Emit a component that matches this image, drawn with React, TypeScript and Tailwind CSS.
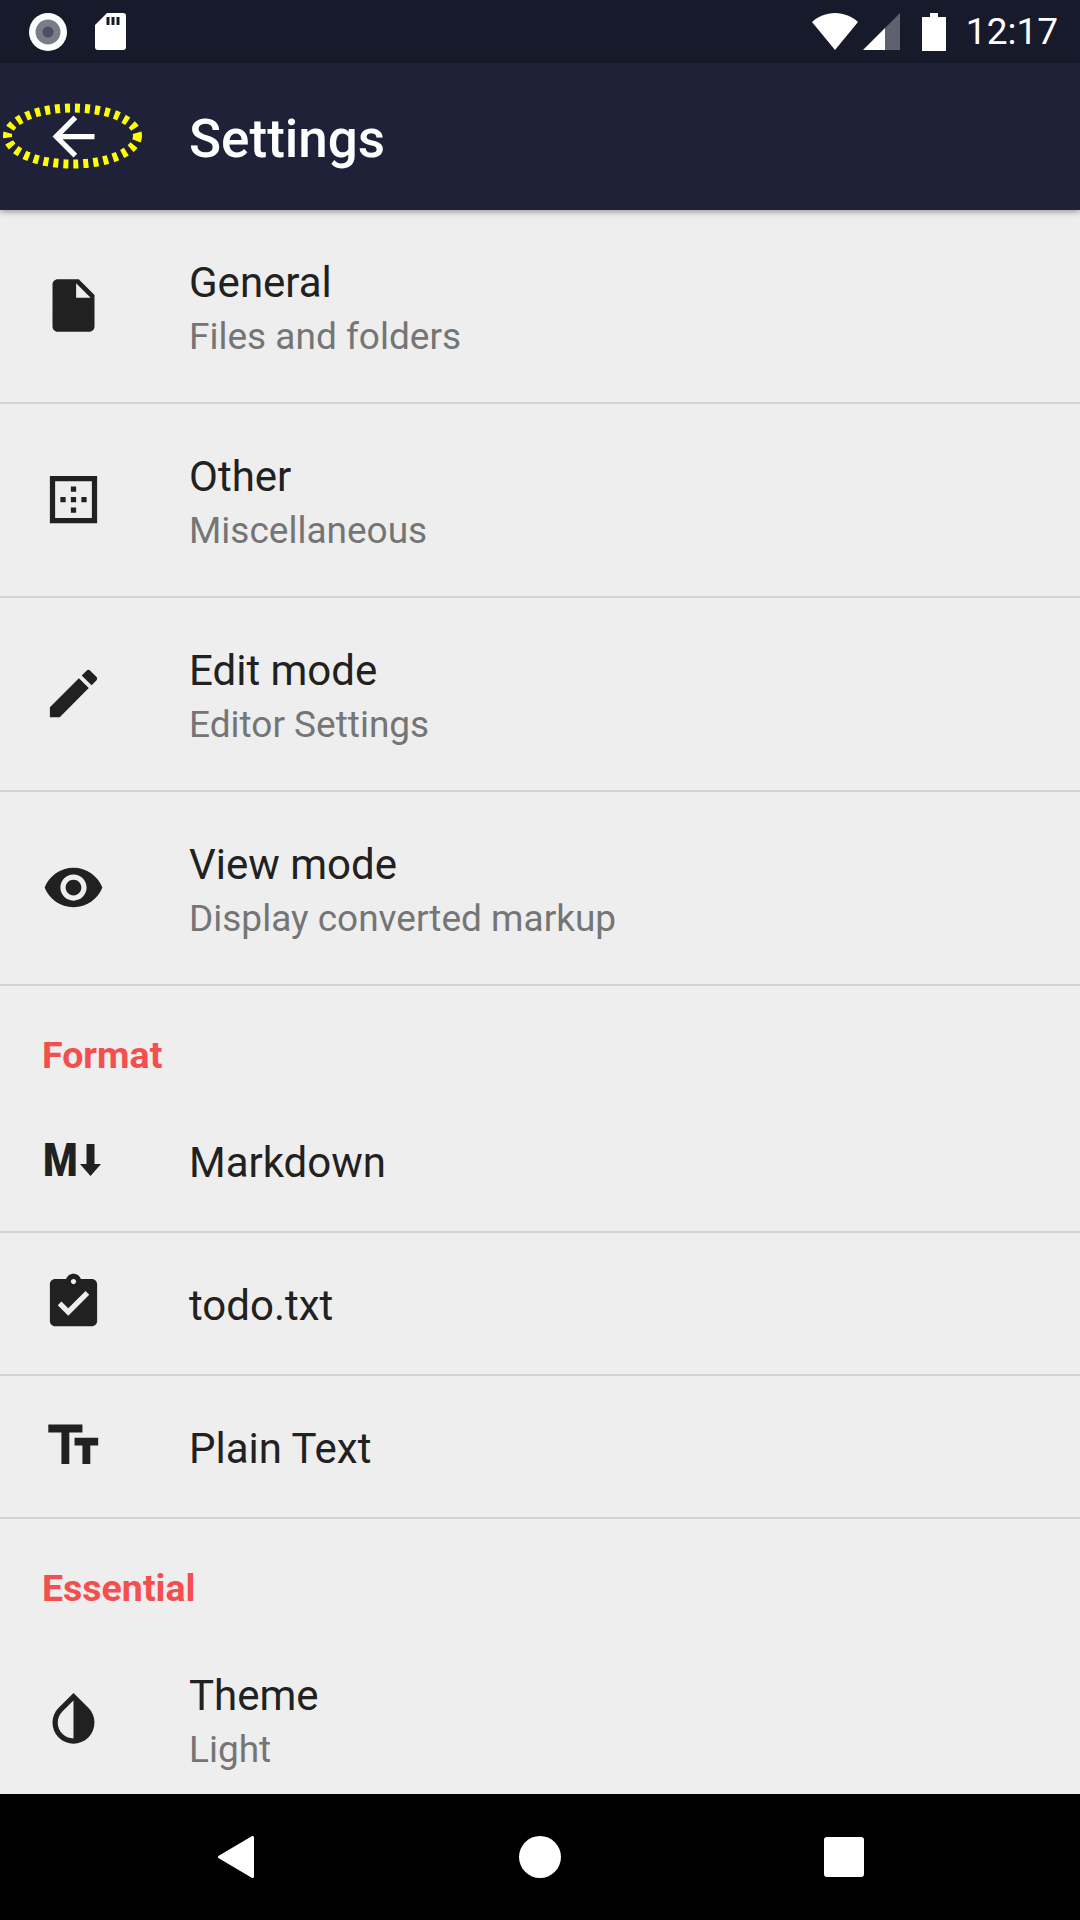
const ROBOTO = "font-['Roboto',sans-serif]";

function Icon({ d }: { d: string }) {
  return (
    <svg viewBox="0 0 24 24" className="w-[63px] h-[63px] fill-[#212121]">
      <path d={d} />
    </svg>
  );
}

function MarkdownIcon() {
  return (
    <div className="w-[63px] h-[63px] flex items-center">
      <span className="ml-[1px] w-[38px] text-[46px] leading-[46px] font-black text-[#212121] origin-left scale-x-[0.86] font-['Roboto',sans-serif]">
        M
      </span>
      <svg viewBox="0 0 21 32" className="w-[21px] h-[32px] -ml-[1px] fill-[#212121]">
        <path d="M6.5 0h8v20H21L10.5 32 0 20h6.5z" />
      </svg>
    </div>
  );
}

function Row({
  icon,
  title,
  sub,
  h = "h-[194px]",
}: {
  icon: React.ReactNode;
  title: string;
  sub?: string;
  h?: string;
}) {
  return (
    <div className={`${h} shrink-0 flex items-center border-b-2 border-[#d2d2d2] pl-[42px]`}>
      <div className="w-[63px] h-[63px] mb-[2px] shrink-0">{icon}</div>
      <div className={`ml-[84px] flex flex-col ${sub ? "pt-[7px]" : "pt-[5px]"}`}>
        <span className="text-[42px] leading-[54px] text-[#212121]">{title}</span>
        {sub && <span className="text-[37px] leading-[54px] text-[#757575]">{sub}</span>}
      </div>
    </div>
  );
}

function Header({ children }: { children: string }) {
  return (
    <div className="h-[104px] shrink-0 pl-[42px] pt-[50px] text-[37.5px] leading-[38px] font-bold text-[#f44f4f]">
      {children}
    </div>
  );
}

const P = {
  file: "M6 2c-1.1 0-1.99.9-1.99 2L4 20c0 1.1.89 2 1.99 2H18c1.1 0 2-.9 2-2V8l-6-6H6zm7 7V3.5L18.5 9H13z",
  border: "M13 7h-2v2h2V7zm0 4h-2v2h2v-2zm4 0h-2v2h2v-2zM3 3v18h18V3H3zm16 16H5V5h14v14zm-6-4h-2v2h2v-2zm-4-4H7v2h2v-2z",
  edit: "M3 17.25V21h3.75L17.81 9.94l-3.75-3.75L3 17.25zM20.71 7.04c.39-.39.39-1.02 0-1.41l-2.34-2.34c-.39-.39-1.02-.39-1.41 0l-1.83 1.83 3.75 3.75 1.83-1.83z",
  eye: "M12 4.5C7 4.5 2.73 7.61 1 12c1.73 4.39 6 7.5 11 7.5s9.27-3.11 11-7.5c-1.73-4.39-6-7.5-11-7.5zM12 17c-2.76 0-5-2.24-5-5s2.24-5 5-5 5 2.24 5 5-2.24 5-5 5zm0-8c-1.66 0-3 1.34-3 3s1.34 3 3 3 3-1.34 3-3-1.34-3-3-3z",
  todo: "M19 3h-4.18C14.4 1.84 13.3 1 12 1c-1.3 0-2.4.84-2.82 2H5c-1.1 0-2 .9-2 2v14c0 1.1.9 2 2 2h14c1.1 0 2-.9 2-2V5c0-1.1-.9-2-2-2zm-7 0c.55 0 1 .45 1 1s-.45 1-1 1-1-.45-1-1 .45-1 1-1zm-2 14l-4-4 1.41-1.41L10 14.17l6.59-6.59L18 9l-8 8z",
  size: "M2.4 4v3h5v12h3V7h5V4H2.400zm19 5h-9v3h3v7h3v-7h3V9z",
  theme: "M17.66 7.93L12 2.27 6.34 7.93c-3.12 3.12-3.12 8.19 0 11.31C7.9 20.8 9.95 21.58 12 21.58c2.05 0 4.1-.78 5.66-2.34 3.12-3.12 3.12-8.19 0-11.31zM12 19.59c-1.6 0-3.11-.62-4.24-1.76C6.62 16.69 6 15.19 6 13.59s.62-3.11 1.76-4.24L12 5.1v14.49z",
};

function StatusBar() {
  return (
    <div className="h-[63px] shrink-0 bg-[#171a2b] flex items-center pl-[29px] pr-[22px]">
      <svg viewBox="0 0 38 38" className="w-[38px] h-[38px]">
        <circle cx="19" cy="19" r="19" fill="#fff" />
        <circle cx="19" cy="19" r="12.5" fill="#7a7c88" />
        <circle cx="19" cy="19" r="5.5" fill="#4d5060" />
      </svg>
      <svg viewBox="0 0 31 37" className="w-[31px] h-[37px] ml-[28px]">
        <path
          fillRule="evenodd"
          fill="#fff"
          d="M12 0h16a3 3 0 0 1 3 3v31a3 3 0 0 1-3 3H3a3 3 0 0 1-3-3V12zM11.5 4v8h3V4zM16.5 4v8h3V4zM21.5 4v8h3V4z"
        />
      </svg>
      <div className="flex-1" />
      <svg viewBox="0 0 46 37" className="w-[46px] h-[37px]">
        <path fill="#fff" d="M23 37L0 9C6 3.500 14 0 23 0s17 3.500 23 9z" />
      </svg>
      <svg viewBox="0 0 37 37" className="w-[37px] h-[37px] ml-[5px]">
        <path fill="#5f616e" d="M37 0v37H22V15z" />
        <path fill="#fff" d="M22 15v22H0z" />
      </svg>
      <svg viewBox="0 0 24 38" className="w-[24px] h-[38px] ml-[22px]">
        <path fill="#fff" d="M8 0h8v4h8v34H0V4h8z" />
      </svg>
      <span className="ml-[20px] text-[37px] leading-[38px] text-white">12:17</span>
    </div>
  );
}

function AppBar() {
  return (
    <div className="relative z-10 h-[147px] shrink-0 bg-[#1e2138] flex items-center pl-[42px] shadow-[0_2px_6px_rgba(0,0,0,0.35)]">
      <svg viewBox="0 0 24 24" className="w-[63px] h-[63px] fill-white">
        <path d="M20 11H7.83l5.59-5.59L12 4l-8 8 8 8 1.41-1.41L7.83 13H20v-2z" />
      </svg>
      <svg viewBox="0 0 146 70" className="absolute left-0 top-[38px] w-[146px] h-[70px]">
        <ellipse
          cx="72.500"
          cy="35"
          rx="65"
          ry="28"
          fill="none"
          stroke="#ffff00"
          strokeWidth="9"
          strokeDasharray="5 5"
        />
      </svg>
      <span className="ml-[84px] pt-[5px] text-[53px] leading-[60px] font-medium text-white">Settings</span>
    </div>
  );
}

function NavBar() {
  return (
    <div className="h-[126px] shrink-0 bg-black relative flex items-center">
      <div className="w-full flex items-center justify-between pl-[218px] pr-[216px]">
        <svg viewBox="0 0 36 42" className="w-[36px] h-[42px]">
          <path fill="#fff" stroke="#fff" strokeWidth="3" strokeLinejoin="round" d="M34.500 1.500v39L1.500 21z" />
        </svg>
        <div className="ml-[2px] w-[42px] h-[42px] rounded-full bg-white" />
        <div className="w-[40px] h-[40px] rounded-[3px] bg-white" />
      </div>
    </div>
  );
}

export default function App() {
  return (
    <div className={`w-[1080px] h-[1920px] flex flex-col bg-[#eeeeee] overflow-hidden ${ROBOTO}`}>
      <StatusBar />
      <AppBar />
      <main className="flex-1 min-h-0 overflow-hidden flex flex-col">
        <Row icon={<Icon d={P.file} />} title="General" sub="Files and folders" />
        <Row icon={<Icon d={P.border} />} title="Other" sub="Miscellaneous" />
        <Row icon={<Icon d={P.edit} />} title="Edit mode" sub="Editor Settings" />
        <Row icon={<Icon d={P.eye} />} title="View mode" sub="Display converted markup" />
        <Header>Format</Header>
        <Row h="h-[143px]" icon={<MarkdownIcon />} title="Markdown" />
        <Row h="h-[143px]" icon={<Icon d={P.todo} />} title="todo.txt" />
        <Row h="h-[143px]" icon={<Icon d={P.size} />} title="Plain Text" />
        <Header>Essential</Header>
        <Row icon={<Icon d={P.theme} />} title="Theme" sub="Light" />
      </main>
      <NavBar />
    </div>
  );
}
